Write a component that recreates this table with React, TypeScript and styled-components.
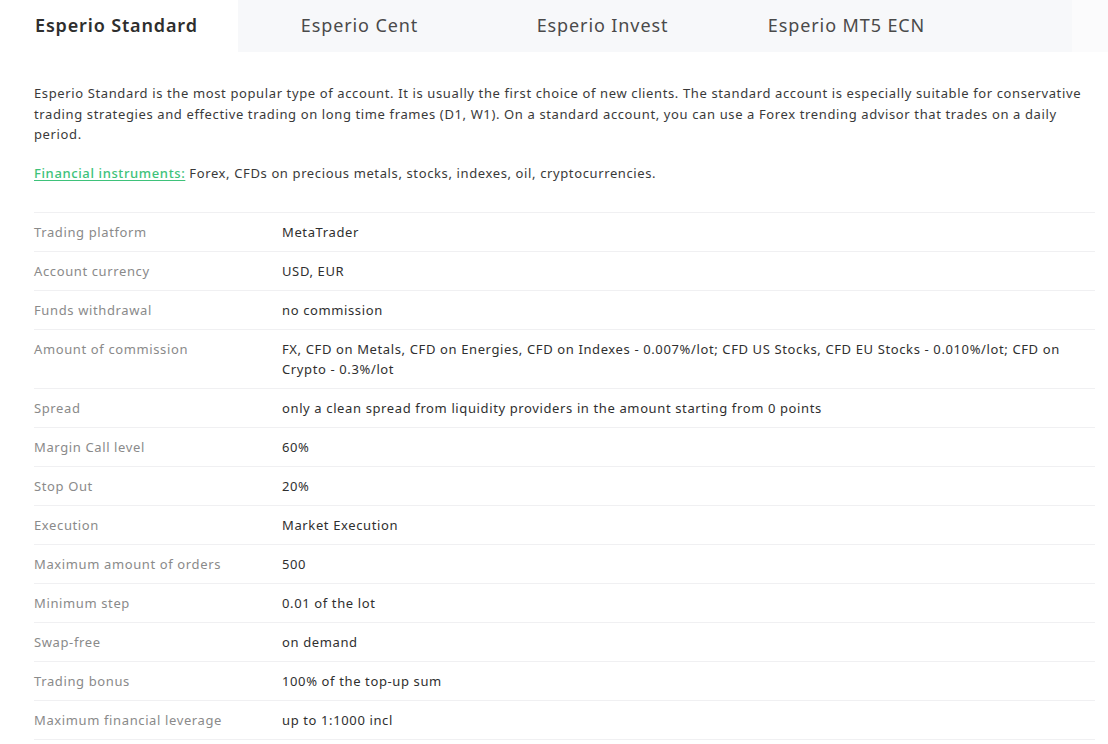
import React from "react";
import styled, { createGlobalStyle } from "styled-components";

const Global = createGlobalStyle`
  html, body { margin: 0; padding: 0; background: #ffffff; }
  body { font-family: "Noto Sans", "Liberation Sans", sans-serif; color: #3a3a3a; }
  * { box-sizing: border-box; }
`;

const Page = styled.div`
  width: 1108px;
  height: 744px;
  overflow: hidden;
  background: #fff;
`;

const Tabs = styled.div`
  display: flex;
  height: 52px;
  background: linear-gradient(to right, #f7f8fa 0, #f7f8fa 1072px, #fbfbfc 1072px);
`;

const Tab = styled.div<{ $active?: boolean; $w: number }>`
  width: ${(p) => p.$w}px;
  display: flex;
  align-items: center;
  justify-content: ${(p) => (p.$active ? "flex-start" : "center")};
  padding-left: ${(p) => (p.$active ? "35px" : "0")};
  background: ${(p) => (p.$active ? "#ffffff" : "transparent")};
  font-size: 18px;
  letter-spacing: ${(p) => (p.$active ? "0.85px" : "0.9px")};
  font-weight: ${(p) => (p.$active ? 600 : 400)};
  color: ${(p) => (p.$active ? "#2e2e2e" : "#4a4a4a")};
  padding-bottom: 2px;
`;

const Body = styled.div`
  padding: 31px 13px 0 34px;
  font-size: 13px;
  letter-spacing: 0.62px;
`;

const Intro = styled.p`
  margin: 0;
  line-height: 20.5px;
  color: #3a3a3a;
`;

const Instruments = styled.p`
  margin: 18.5px 0 0;
  line-height: 20px;
  color: #3a3a3a;
`;

const Link = styled.a`
  color: #3ec27a;
  font-weight: 500;
  text-decoration: underline;
  text-underline-offset: 2px;
`;

const Table = styled.div`
  margin-top: 29px;
  border-top: 1px solid #f0f0f2;
`;

const Row = styled.div`
  display: grid;
  grid-template-columns: 248px 1fr;
  padding: 9px 0;
  border-bottom: 1px solid #f0f0f2;
  line-height: 20px;
`;

const Label = styled.div`
  color: #8a8a8a;
`;

const Value = styled.div`
  color: #2f2f2f;
`;

const rows: [string, string][] = [
  ["Trading platform", "MetaTrader"],
  ["Account currency", "USD, EUR"],
  ["Funds withdrawal", "no commission"],
  [
    "Amount of commission",
    "FX, CFD on Metals, CFD on Energies, CFD on Indexes - 0.007%/lot; CFD US Stocks, CFD EU Stocks - 0.010%/lot; CFD on Crypto - 0.3%/lot",
  ],
  ["Spread", "only a clean spread from liquidity providers in the amount starting from 0 points"],
  ["Margin Call level", "60%"],
  ["Stop Out", "20%"],
  ["Execution", "Market Execution"],
  ["Maximum amount of orders", "500"],
  ["Minimum step", "0.01 of the lot"],
  ["Swap-free", "on demand"],
  ["Trading bonus", "100% of the top-up sum"],
  ["Maximum financial leverage", "up to 1:1000 incl"],
];

export default function App() {
  return (
    <Page>
      <Global />
      <Tabs>
        <Tab $active $w={238}>Esperio Standard</Tab>
        <Tab $w={243}>Esperio Cent</Tab>
        <Tab $w={243}>Esperio Invest</Tab>
        <Tab $w={245}>Esperio MT5 ECN</Tab>
      </Tabs>
      <Body>
        <Intro>
          Esperio Standard is the most popular type of account. It is usually the first choice of new clients. The
          standard account is especially suitable for conservative trading strategies and effective trading on long
          time frames (D1, W1). On a standard account, you can use a Forex trending advisor that trades on a daily
          period.
        </Intro>
        <Instruments>
          <Link href="#">Financial instruments:</Link> Forex, CFDs on precious metals, stocks, indexes, oil,
          cryptocurrencies.
        </Instruments>
        <Table>
          {rows.map(([l, v]) => (
            <Row key={l}>
              <Label>{l}</Label>
              <Value>{v}</Value>
            </Row>
          ))}
        </Table>
      </Body>
    </Page>
  );
}
